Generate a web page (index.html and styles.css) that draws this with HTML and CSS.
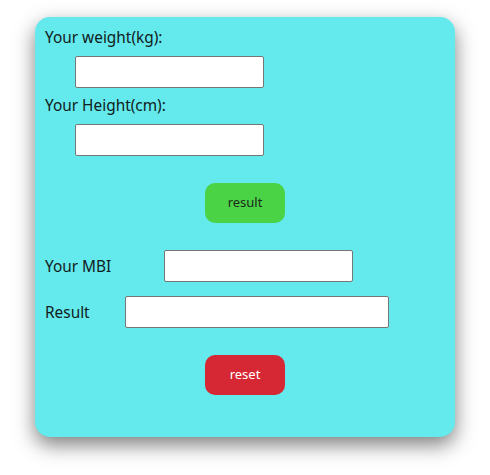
FILE: index.html
```html
<!DOCTYPE html>
<html>
<head>
<meta charset="utf-8">
<link rel="stylesheet" href="styles.css">
</head>
<body>
<div class="card">
  <div class="label">Your weight(kg):</div>
  <input class="field indent" type="text">
  <div class="label second">Your Height(cm):</div>
  <input class="field indent" type="text">
  <div class="btn-row first-btn"><button class="btn green">result</button></div>
  <div class="row mbi"><span class="row-label mbi-label">Your MBI</span><input class="field" type="text"></div>
  <div class="row res"><span class="row-label res-label">Result</span><input class="field wide" type="text"></div>
  <div class="btn-row last-btn"><button class="btn red">reset</button></div>
</div>
</body>
</html>
```
FILE: styles.css
```css
html, body { margin: 0; padding: 0; background: #fff; }
body { font-family: "Noto Sans", "Open Sans", sans-serif; color: #112020; padding: 17px 0 38px; }
.card {
  width: 420px;
  box-sizing: border-box;
  margin: 0 auto;
  background: #64e9ec;
  border-radius: 15px;
  padding: 11px 10px 42px;
  box-shadow: 0 8px 20px rgba(0,0,0,0.5);
}
.label { font-size: 15.4px; line-height: 20px; height: 20px; }
.label.second { margin-top: 8px; }
.field {
  display: block;
  box-sizing: border-box;
  width: 189px;
  height: 32px;
  border: 1px solid #767676;
  border-radius: 2px;
  background: #fff;
  margin: 0;
  padding: 0;
}
.indent { margin-left: 30px; margin-top: 8px; }
.btn-row { display: flex; justify-content: center; }
.first-btn { margin-top: 27px; }
.last-btn { margin-top: 27px; }
.btn {
  width: 80px;
  height: 40px;
  border: none;
  border-radius: 10px;
  font-family: "Noto Sans", sans-serif;
  font-size: 13px;
  line-height: 38px;
  padding: 0 0 2px;
}
.green { background: #4bd346; color: #1b2a1b; }
.red { background: #d62834; color: #fff; }
.row { display: flex; align-items: center; font-size: 15.4px; }
.mbi { margin-top: 27px; }
.res { margin-top: 14px; }
.row-label { display: block; }
.mbi-label { width: 119px; }
.res-label { width: 80px; }
.wide { width: 264px; }
```
